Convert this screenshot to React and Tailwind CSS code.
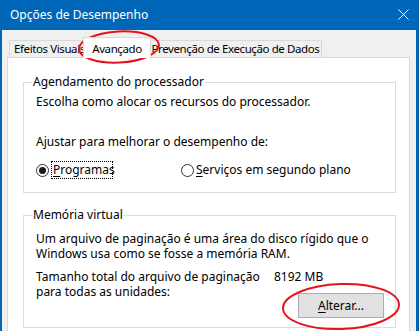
import React from "react";

const font = { fontFamily: '"Noto Sans", "Open Sans", sans-serif' };

function Radio({ checked }) {
  return (
    <span className="flex h-[13px] w-[13px] items-center justify-center rounded-full border border-[#333333] bg-white">
      {checked && <span className="h-[7px] w-[7px] rounded-full bg-[#1a1a1a]" />}
    </span>
  );
}

export default function App() {
  return (
    <div
      className="relative flex h-[331px] w-[419px] flex-col overflow-hidden bg-[#0067B8] text-[12px] leading-[16px] text-black"
      style={font}
    >
      {/* Title bar */}
      <div className="flex h-[30px] shrink-0 items-center justify-between pl-[10px] pr-[10px] text-white">
        <span>Opções de Desempenho</span>
        <svg width="11" height="11" viewBox="0 0 11 11" className="mt-[-1px]">
          <path d="M0.5 0.5 L10.5 10.5 M10.5 0.5 L0.5 10.5" stroke="white" strokeWidth="1" />
        </svg>
      </div>

      {/* Body */}
      <div className="ml-[2px] mr-[3px] flex flex-1 flex-col bg-[#F0F0F0] pl-[5px]">
        {/* Tabs */}
        <div className="flex h-[27px] items-end whitespace-nowrap pl-[2px] text-[11.5px] tracking-[-0.4px]">
          <div className="flex h-[17px] w-[76px] items-center justify-start border border-b-0 border-[#D9D9D9] bg-[#F0F0F0] pl-[4px]">
            Efeitos Visuais
          </div>
          <div className="relative z-10 -mx-[2px] -mb-px flex h-[21px] w-[68px] items-start justify-center border border-b-0 border-[#D9D9D9] bg-white pt-[3px]">
            Avançado
          </div>
          <div className="flex h-[17px] w-[173px] items-center justify-center border border-b-0 border-[#D9D9D9] bg-[#F0F0F0]">
            Prevenção de Execução de Dados
          </div>
        </div>

        {/* Panel */}
        <div className="flex w-[403px] flex-1 flex-col border border-b-0 border-[#D9D9D9] bg-white pl-[15px] pt-[16px]">
          <fieldset className="w-[373px] border border-[#DCDCDC] pl-[8px] pb-[14px]">
            <legend className="px-[1px]">Agendamento do processador</legend>
            <div className="flex flex-col pl-[4px] pt-[4px]">
              <div>Escolha como alocar os recursos do processador.</div>
              <div className="mt-[24px]">Ajustar para melhorar o desempenho de:</div>
              <div className="mt-[12px] flex h-[16px] items-center">
                <Radio checked />
                <span className="ml-[3px] flex h-[16px] w-[60px] items-center pl-[1px] outline-1 outline-dotted outline-black">
                  <span className="underline underline-offset-[2px]">P</span>rogramas
                </span>
                <span className="ml-[69px]">
                  <Radio />
                </span>
                <span className="ml-[2px]">
                  <span className="underline underline-offset-[2px]">S</span>erviços em segundo plano
                </span>
              </div>
            </div>
          </fieldset>

          <fieldset className="mt-[14px] w-[373px] border border-[#DCDCDC] pl-[8px] pb-[9px]">
            <legend className="px-[1px]">Memória virtual</legend>
            <div className="flex flex-col pl-[4px] pt-[8px] leading-[15px]">
              <div>
                Um arquivo de paginação é uma área do disco rígido que o
                <br />
                Windows usa como se fosse a memória RAM.
              </div>
              <div className="mt-[8px] flex">
                <div className="w-[238px]">
                  Tamanho total do arquivo de paginação
                  <br />
                  para todas as unidades:
                </div>
                <div>8192 MB</div>
              </div>
              <div className="mr-[11px] mt-[-6px] flex justify-end">
                <button className="flex h-[25px] w-[86px] items-center justify-center border border-[#ADADAD] bg-[#E1E1E1]">
                  <span className="underline underline-offset-[2px]">A</span>lterar...
                </button>
              </div>
            </div>
          </fieldset>
        </div>
      </div>

      {/* Red annotation ellipses */}
      <svg className="pointer-events-none absolute left-0 top-0" width="419" height="331">
        <ellipse cx="119" cy="47" rx="40" ry="15.5" fill="none" stroke="#E4141C" strokeWidth="2" transform="rotate(-3 119 47)" />
        <ellipse cx="341" cy="306.5" rx="58" ry="22.5" fill="none" stroke="#E4141C" strokeWidth="2" transform="rotate(-2 341 306.5)" />
      </svg>
    </div>
  );
}
